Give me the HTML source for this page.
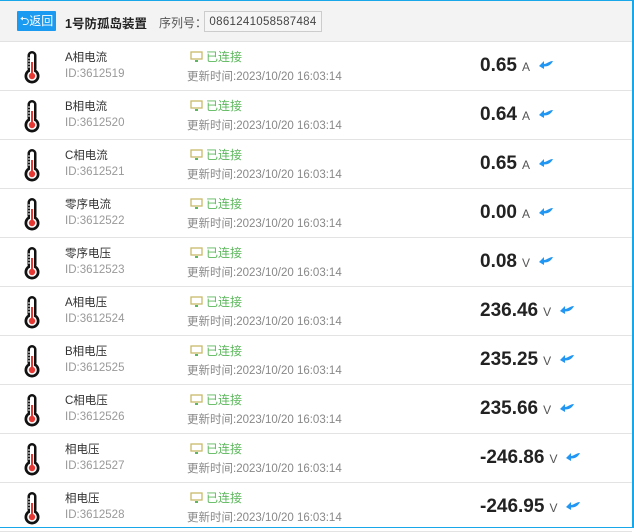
<!DOCTYPE html><html><head><meta charset="utf-8"><style>
body{margin:0;width:634px;height:528px;overflow:hidden;background:#fff;font-family:"Liberation Sans","Noto Sans CJK SC",sans-serif;}
.frame{position:absolute;left:0;top:0;width:632px;height:526px;border-top:1px solid #18a8ea;border-right:2px solid #18a8ea;border-bottom:1px solid #18a8ea;box-sizing:content-box}
.hdr{position:absolute;left:0;top:1px;width:632px;height:40px;background:#f3f3f3;border-bottom:1px solid #e2e2e2}
.back{position:absolute;left:17px;top:10px;width:39px;height:20px;background:#1a9af0;color:#fff;font-size:12px;line-height:20px;text-align:center;border-radius:1px}
.title{position:absolute;left:65px;top:12px;font-size:12.5px;font-weight:bold;color:#222}
.sl{position:absolute;left:159px;top:13px;font-size:12px;color:#555}
.sn{position:absolute;left:204px;top:10px;width:118px;height:21px;border:1px solid #ccc;background:#f5f5f5;font-size:11.5px;color:#444;line-height:20px;text-align:center;box-sizing:border-box;letter-spacing:0.3px}
.row{position:absolute;left:0;width:632px;height:49px;border-bottom:1px solid #e3e3e3;box-sizing:border-box}
.ic{position:absolute;left:24px;top:8px}
.nm{position:absolute;left:65px;top:7px;font-size:11.5px;color:#333}
.id{position:absolute;left:65px;top:26px;font-size:11.5px;color:#999}
.st{position:absolute;left:190px;top:6px;font-size:12px;color:#5cb85c}
.st svg{vertical-align:-2px;margin-right:3px}
.tm{position:absolute;left:187px;top:26px;font-size:11.5px;color:#888}
.val{position:absolute;left:480px;top:13px;font-size:19px;font-weight:bold;color:#222;white-space:nowrap}
.val small{font-size:12px;font-weight:normal;color:#555;margin-left:5px}
.val svg{vertical-align:1px;margin-left:8px}
</style></head><body>
<div class="frame"></div>
<div class="hdr"><div class="back">⮌返回</div><div class="title">1号防孤岛装置</div><div class="sl">序列号：</div><div class="sn">0861241058587484</div></div>
<div id="rows"></div>
<script>
var d=[["A相电流","3612519","0.65","A"],["B相电流","3612520","0.64","A"],["C相电流","3612521","0.65","A"],["零序电流","3612522","0.00","A"],["零序电压","3612523","0.08","V"],["A相电压","3612524","236.46","V"],["B相电压","3612525","235.25","V"],["C相电压","3612526","235.66","V"],["相电压","3612527","-246.86","V"],["相电压","3612528","-246.95","V"]];
var therm='<svg width="16" height="34" viewBox="0 0 16 34"><rect x="3.5" y="1" width="9" height="22" rx="4.5" fill="#111"/><circle cx="8" cy="26" r="7.5" fill="#111"/><rect x="6" y="3.5" width="4" height="22" rx="2" fill="#fff"/><circle cx="8" cy="26" r="4.8" fill="#fff"/><rect x="7" y="12" width="2" height="12" fill="#e53935"/><circle cx="8" cy="26" r="3.2" fill="#e53935"/><g stroke="#fff" stroke-width="1"><line x1="4" y1="8" x2="6" y2="8"/><line x1="4" y1="11" x2="6" y2="11"/><line x1="4" y1="14" x2="6" y2="14"/><line x1="4" y1="17" x2="6" y2="17"/></g></svg>';
var mon='<svg width="13" height="12" viewBox="0 0 13 12"><rect x="1" y="1" width="11" height="7" fill="none" stroke="#c9b96a" stroke-width="1.3"/><rect x="5" y="9" width="3" height="2" fill="#5cb85c"/></svg>';
var arr='<svg width="16" height="10" viewBox="0 0 16 10"><path d="M15 1 C11 1 9 4 6 4 L6 1 L1 6 L6 9 L6 6.5 C10 6.5 13 5 15 1Z" fill="#2196f3"/></svg>';
var h='';
d.forEach(function(r,i){h+='<div class="row" style="top:'+(42+49*i)+'px"><div class="ic">'+therm+'</div><div class="nm">'+r[0]+'</div><div class="id">ID:'+r[1]+'</div><div class="st">'+mon+'已连接</div><div class="tm">更新时间:2023/10/20 16:03:14</div><div class="val">'+r[2]+'<small>'+r[3]+'</small>'+arr+'</div></div>';});
document.getElementById('rows').innerHTML=h;
</script>
</body></html>
